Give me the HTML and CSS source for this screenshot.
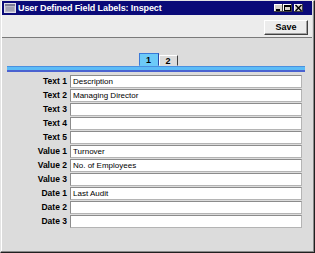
FILE: index.html
```html
<!DOCTYPE html>
<html>
<head>
<meta charset="utf-8">
<link rel="stylesheet" href="styles.css">
</head>
<body>
<div class="window">
  <div class="titlebar">
    <svg class="appicon" width="12" height="10" viewBox="0 0 12 10">
      <rect x="0.5" y="0.5" width="11" height="9" fill="#b8b8c8" stroke="#e0e0e8"/>
      <rect x="1" y="1" width="10" height="2" fill="#7c7c98"/>
      <line x1="2" y1="5" x2="10" y2="5" stroke="#8a8aa0"/>
      <line x1="2" y1="7" x2="10" y2="7" stroke="#8a8aa0"/>
    </svg>
    <span class="title">User Defined Field Labels: Inspect</span>
    <div class="controls">
      <span class="cbtn"><svg width="9" height="8" viewBox="0 0 9 8"><rect x="2" y="5" width="4" height="2" fill="#000"/></svg></span>
      <span class="cbtn"><svg width="9" height="8" viewBox="0 0 9 8"><rect x="1.5" y="1.5" width="6" height="5" fill="none" stroke="#000"/><rect x="1" y="1" width="7" height="2" fill="#000"/></svg></span>
      <span class="cbtn close"><svg width="9" height="8" viewBox="0 0 9 8"><path d="M1.5 1 L7.5 7 M7.5 1 L1.5 7" stroke="#000" stroke-width="1.4"/></svg></span>
    </div>
  </div>
  <div class="toolbar">
    <button class="save">Save</button>
  </div>
  <div class="content">
    <div class="tabs">
      <div class="tab active">1</div>
      <div class="tab">2</div>
    </div>
    <div class="bluebar"></div>
    <div class="form">
      <label>Text 1</label><div class="field">Description</div>
      <label>Text 2</label><div class="field">Managing Director</div>
      <label>Text 3</label><div class="field"></div>
      <label>Text 4</label><div class="field"></div>
      <label>Text 5</label><div class="field"></div>
      <label>Value 1</label><div class="field">Turnover</div>
      <label>Value 2</label><div class="field">No. of Employees</div>
      <label>Value 3</label><div class="field"></div>
      <label>Date 1</label><div class="field">Last Audit</div>
      <label>Date 2</label><div class="field"></div>
      <label>Date 3</label><div class="field"></div>
    </div>
  </div>
</div>
</body>
</html>
```

FILE: styles.css
```css
html, body {
  margin: 0;
  padding: 0;
  background: #ffffff;
}

.window {
  width: 315px;
  height: 253px;
  box-sizing: border-box;
  background: #dcdcdc;
  border: 1px solid;
  border-color: #e4e4e4 #202020 #202020 #e4e4e4;
  box-shadow: inset -1px -1px 0 #8a8a8a, inset 1px 1px 0 #ffffff;
  padding: 0 2px 2px 1px;
  display: flex;
  flex-direction: column;
  font-family: "Liberation Sans", Arial, sans-serif;
}

.titlebar {
  height: 14px;
  background: #0a0a78;
  display: flex;
  align-items: center;
  padding-left: 2px;
  flex: none;
}

.appicon {
  display: block;
  margin-right: 2px;
}

.title {
  color: #ffffff;
  font-weight: bold;
  font-size: 9px;
  letter-spacing: -0.1px;
  white-space: nowrap;
}

.controls {
  margin-left: auto;
  display: flex;
  margin-right: 9px;
}

.cbtn {
  width: 9px;
  height: 8px;
  background: #d4d0c8;
  box-shadow: inset -1px -1px 0 #404040, inset 1px 1px 0 #ffffff;
  display: block;
}
.cbtn svg { display: block; }
.cbtn.close { margin-left: 2px; }

.toolbar {
  height: 22px;
  background: #ececec;
  border-bottom: 1px solid #7a7a7a;
  display: flex;
  justify-content: flex-end;
  align-items: center;
  padding-right: 4px;
  flex: none;
}

.save {
  width: 44px;
  height: 15px;
  padding: 0;
  margin-top: 2px;
  background: #ececec;
  border: 1px solid;
  border-color: #ffffff #404040 #404040 #ffffff;
  box-shadow: inset -1px -1px 0 #a0a0a0;
  font-family: "Liberation Sans", Arial, sans-serif;
  font-weight: bold;
  font-size: 9px;
  color: #000;
}

.content {
  flex: 1;
  padding-top: 14px;
}

.tabs {
  display: flex;
  justify-content: center;
  align-items: flex-end;
  height: 14px;
  padding-left: 2px;
}

.tab {
  width: 19px;
  height: 11px;
  box-sizing: border-box;
  border: 1px solid;
  border-color: #ffffff #404040 transparent #ffffff;
  background: #dcdcdc;
  font-weight: bold;
  font-size: 9px;
  text-align: center;
  line-height: 10px;
}

.tab.active {
  height: 13px;
  width: 20px;
  background: #6ccaf8;
  border-color: #3a7ad8 #2a4aa8 transparent #3a7ad8;
  line-height: 12px;
}

.bluebar {
  margin: 0 7px 0 5px;
  height: 6px;
  box-sizing: border-box;
  background: #5cbcf6;
  border-top: 1px solid #4a90e0;
  border-bottom: 2px solid #4a62d0;
}

.form {
  margin-top: 3px;
  display: grid;
  grid-template-columns: 65px 232px;
  column-gap: 3px;
  row-gap: 1px;
  grid-auto-rows: 13px;
}

.form label {
  text-align: right;
  font-weight: bold;
  font-size: 8.5px;
  line-height: 13px;
  color: #000;
  white-space: nowrap;
}

.field {
  background: #ffffff;
  border: 1px solid;
  border-color: #8c8c8c #b4b4b4 #b4b4b4 #8c8c8c;
  box-sizing: border-box;
  font-size: 8px;
  line-height: 11px;
  padding-left: 2px;
  color: #000;
  white-space: nowrap;
}
```
